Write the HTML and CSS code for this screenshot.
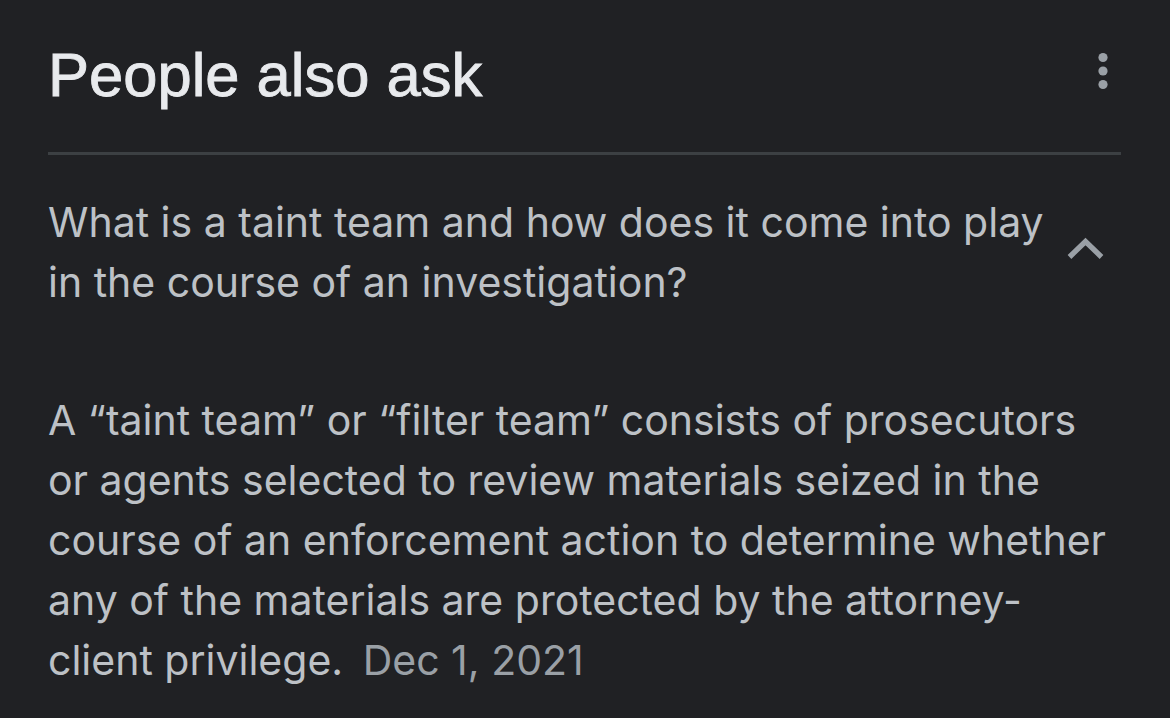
FILE: index.html
```html
<!DOCTYPE html>
<html lang="en">
<head>
<meta charset="utf-8">
<title>People also ask</title>
<link rel="stylesheet" href="styles.css">
</head>
<body>
<main class="paa">
  <header class="paa-header">
    <h2 class="paa-title">People also ask</h2>
    <svg class="more-icon" width="20" height="40" viewBox="0 0 20 40" aria-hidden="true">
      <circle cx="10" cy="6.5" r="4.6"/>
      <circle cx="10" cy="20" r="4.6"/>
      <circle cx="10" cy="33.5" r="4.6"/>
    </svg>
  </header>
  <div class="divider"></div>
  <section class="question">
    <p class="question-text">What is a taint team and how does it come into play<br>in the course of an investigation?</p>
    <svg class="chevron" width="40" height="24" viewBox="0 0 40 24" aria-hidden="true">
      <polyline points="4.5,20 20.5,4.5 36.5,20"/>
    </svg>
  </section>
  <p class="answer">A “taint team” or “filter team” consists of prosecutors<br>or agents selected to review materials seized in the<br>course of an enforcement action to determine whether<br>any of the materials are protected by the attorney-<br>client privilege. <span class="date">Dec 1, 2021</span></p>
</main>
</body>
</html>
```
FILE: styles.css
```css
html, body {
  margin: 0;
  padding: 0;
  background: #202124;
}
body {
  width: 1170px;
  height: 718px;
  overflow: hidden;
}
.paa {
  padding: 44px 49px 0 48px;
}
.paa-header {
  display: flex;
  justify-content: space-between;
  align-items: flex-start;
}
.paa-title {
  margin: 0;
  font-family: "Liberation Sans", Arial, sans-serif;
  font-weight: 400;
  font-size: 61.5px;
  line-height: 61px;
  color: #e8eaed;
  -webkit-text-stroke: 0.9px #e8eaed;
}
.more-icon {
  fill: #9aa0a6;
  margin-top: 7px;
  margin-right: 8px;
}
.divider {
  height: 3px;
  background: #3c4043;
  margin-top: 47px;
}
.question {
  display: flex;
  align-items: center;
  justify-content: space-between;
  margin-top: 37px;
}
.question-text {
  margin: 0;
  font-family: Inter, Roboto, "Noto Sans", sans-serif;
  font-size: 41px;
  line-height: 60px;
  color: #bdc1c6;
}
.chevron {
  fill: none;
  stroke: #9aa0a6;
  stroke-width: 5.3;
  stroke-linecap: butt;
  stroke-linejoin: miter;
  margin-right: 16px;
  margin-top: -6px;
}
.answer {
  margin: 78px 0 0 0;
  font-family: Inter, Roboto, "Noto Sans", sans-serif;
  font-size: 41px;
  line-height: 60px;
  color: #bdc1c6;
}
.date {
  color: #9aa0a6;
  margin-left: 8px;
}
```
